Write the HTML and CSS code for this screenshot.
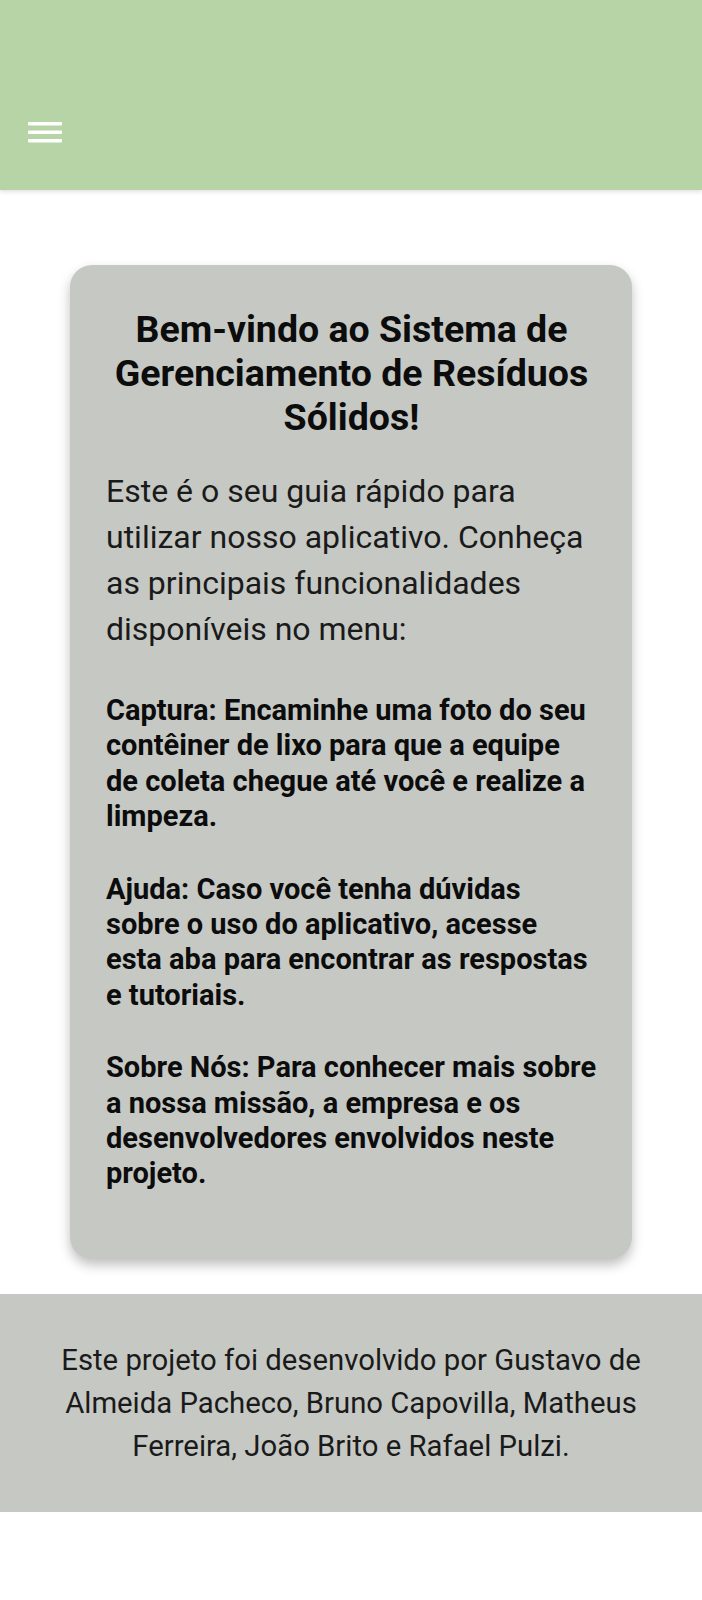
FILE: index.html
```html
<!DOCTYPE html>
<html lang="pt-BR">
<head>
<meta charset="utf-8">
<title>Resíduos Sólidos</title>
<link rel="stylesheet" href="styles.css">
</head>
<body>
<header class="topbar">
  <button class="menu-btn" aria-label="Menu">
    <svg width="34" height="24" viewBox="0 0 34 24" aria-hidden="true">
      <rect x="0" y="2" width="34" height="3.4" rx="0.8" fill="#fff"/>
      <rect x="0" y="10.5" width="34" height="3.4" rx="0.8" fill="#fff"/>
      <rect x="0" y="19" width="34" height="3.4" rx="0.8" fill="#fff"/>
    </svg>
  </button>
</header>
<main class="content">
  <section class="card">
    <h1 class="card-title">Bem-vindo ao Sistema de Gerenciamento de Resíduos Sólidos!</h1>
    <p class="intro">Este é o seu guia rápido para utilizar nosso aplicativo. Conheça as principais funcionalidades disponíveis no menu:</p>
    <p class="feature">Captura: Encaminhe uma foto do seu contêiner de lixo para que a equipe de coleta chegue até você e realize a limpeza.</p>
    <p class="feature">Ajuda: Caso você tenha dúvidas sobre o uso do aplicativo, acesse esta aba para encontrar as respostas e tutoriais.</p>
    <p class="feature">Sobre Nós: Para conhecer mais sobre a nossa missão, a empresa e os desenvolvedores envolvidos neste projeto.</p>
  </section>
</main>
<footer class="footer">
  <p>Este projeto foi desenvolvido por Gustavo de Almeida Pacheco, Bruno Capovilla, Matheus Ferreira, João Brito e Rafael Pulzi.</p>
</footer>
</body>
</html>
```

FILE: styles.css
```css
* { box-sizing: border-box; }
html, body { margin: 0; padding: 0; background: #fff; }
body { font-family: Roboto, "Noto Sans", sans-serif; color: #111; }

.topbar {
  height: 190px;
  background: #b7d4a7;
  box-shadow: 0 2px 4px rgba(0,0,0,0.12);
  display: flex;
  align-items: flex-start;
  padding: 120px 0 0 28px;
  position: relative;
  z-index: 1;
}
.menu-btn {
  background: none;
  border: 0;
  padding: 0;
  display: block;
  line-height: 0;
}

.content {
  padding: 75px 0 35px;
  display: flex;
  justify-content: center;
}
.card {
  width: 562px;
  background: #c6c8c4;
  border-radius: 22px;
  box-shadow: 0 6px 12px rgba(0,0,0,0.25);
  padding: 42px 35px 67px 36px;
}
.card-title {
  margin: 0 -20px 29px;
  text-align: center;
  font-size: 37.5px;
  line-height: 44px;
  font-weight: 700;
  color: #0c0c0c;
}
.intro {
  margin: 0 0 41px;
  font-size: 32px;
  line-height: 46px;
  font-weight: 400;
  color: #1a1a1a;
}
.feature {
  margin: 0 0 37px;
  font-size: 29px;
  line-height: 35.4px;
  font-weight: 700;
  color: #0c0c0c;
}
.feature:last-child { margin-bottom: 0; }

.footer {
  background: #c6c8c4;
  padding: 45px 30px 44px;
  text-align: center;
}
.footer p {
  margin: 0;
  font-size: 29.3px;
  line-height: 43px;
  color: #1a1a1a;
}
```
